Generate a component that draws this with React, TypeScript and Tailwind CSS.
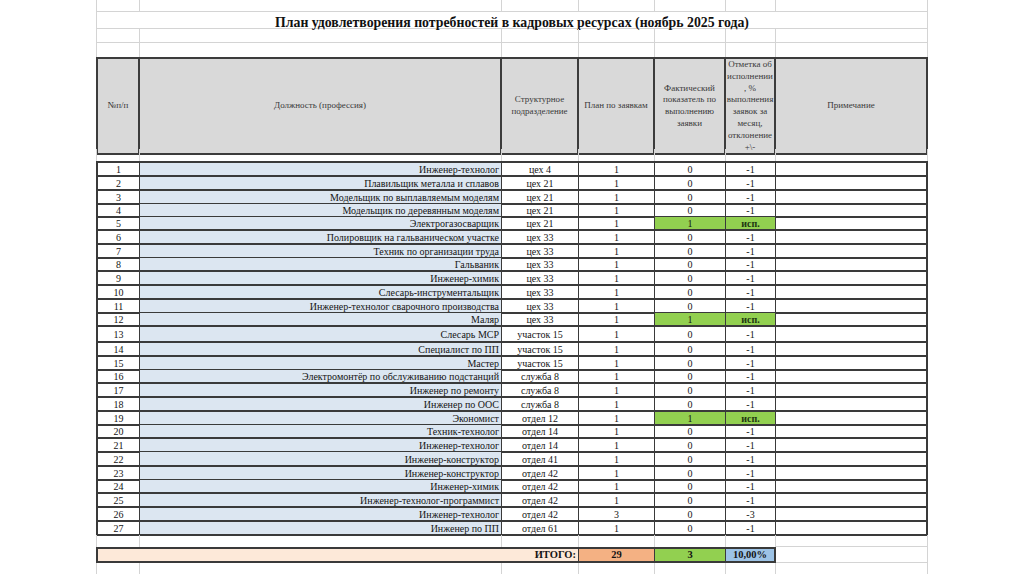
import clsx from "clsx";

type Row = {
  job: string;
  dept: string;
  plan: number;
  fact: number;
  mark: string;
  h: string;
};

const COLS = "grid grid-cols-[44px_362px_77px_76px_71px_50px_152px]";

const rows: Row[] = [
  { job: "Инженер-технолог", dept: "цех 4", plan: 1, fact: 0, mark: "-1", h: "h-[16px]" },
  { job: "Плавильщик металла и сплавов", dept: "цех 21", plan: 1, fact: 0, mark: "-1", h: "h-[14px]" },
  { job: "Модельщик по выплавляемым моделям", dept: "цех 21", plan: 1, fact: 0, mark: "-1", h: "h-[13px]" },
  { job: "Модельщик по деревянным моделям", dept: "цех 21", plan: 1, fact: 0, mark: "-1", h: "h-[13px]" },
  { job: "Электрогазосварщик", dept: "цех 21", plan: 1, fact: 1, mark: "исп.", h: "h-[14px]" },
  { job: "Полировщик на гальваническом участке", dept: "цех 33", plan: 1, fact: 0, mark: "-1", h: "h-[14px]" },
  { job: "Техник по организации труда", dept: "цех 33", plan: 1, fact: 0, mark: "-1", h: "h-[13px]" },
  { job: "Гальваник", dept: "цех 33", plan: 1, fact: 0, mark: "-1", h: "h-[14px]" },
  { job: "Инженер-химик", dept: "цех 33", plan: 1, fact: 0, mark: "-1", h: "h-[14px]" },
  { job: "Слесарь-инструментальщик", dept: "цех 33", plan: 1, fact: 0, mark: "-1", h: "h-[14px]" },
  { job: "Инженер-технолог сварочного производства", dept: "цех 33", plan: 1, fact: 0, mark: "-1", h: "h-[13px]" },
  { job: "Маляр", dept: "цех 33", plan: 1, fact: 1, mark: "исп.", h: "h-[14px]" },
  { job: "Слесарь МСР", dept: "участок 15", plan: 1, fact: 0, mark: "-1", h: "h-[16px]" },
  { job: "Специалист по ПП", dept: "участок 15", plan: 1, fact: 0, mark: "-1", h: "h-[14px]" },
  { job: "Мастер", dept: "участок 15", plan: 1, fact: 0, mark: "-1", h: "h-[13px]" },
  { job: "Электромонтёр по обслуживанию подстанций", dept: "служба 8", plan: 1, fact: 0, mark: "-1", h: "h-[14px]" },
  { job: "Инженер по ремонту", dept: "служба 8", plan: 1, fact: 0, mark: "-1", h: "h-[14px]" },
  { job: "Инженер по ООС", dept: "служба 8", plan: 1, fact: 0, mark: "-1", h: "h-[14px]" },
  { job: "Экономист", dept: "отдел 12", plan: 1, fact: 1, mark: "исп.", h: "h-[13px]" },
  { job: "Техник-технолог", dept: "отдел 14", plan: 1, fact: 0, mark: "-1", h: "h-[14px]" },
  { job: "Инженер-технолог", dept: "отдел 14", plan: 1, fact: 0, mark: "-1", h: "h-[13px]" },
  { job: "Инженер-конструктор", dept: "отдел 41", plan: 1, fact: 0, mark: "-1", h: "h-[15px]" },
  { job: "Инженер-конструктор", dept: "отдел 42", plan: 1, fact: 0, mark: "-1", h: "h-[13px]" },
  { job: "Инженер-химик", dept: "отдел 42", plan: 1, fact: 0, mark: "-1", h: "h-[14px]" },
  { job: "Инженер-технолог-программист", dept: "отдел 42", plan: 1, fact: 0, mark: "-1", h: "h-[14px]" },
  { job: "Инженер-технолог", dept: "отдел 42", plan: 3, fact: 0, mark: "-3", h: "h-[14px]" },
  { job: "Инженер по ПП", dept: "отдел 61", plan: 1, fact: 0, mark: "-1", h: "h-[13px]" },
];

// empty spreadsheet row with light gridlines
function BlankRow({ h, bottom = true }: { h: string; bottom?: boolean }) {
  return (
    <div className={clsx(COLS, h)}>
      {Array.from({ length: 7 }).map((_, i) => (
        <div
          key={i}
          className={clsx("border-r border-[#d4d4d4]", i === 0 && "border-l", bottom && "border-b")}
        />
      ))}
    </div>
  );
}

function HeaderCell({ children, first, last }: { children: React.ReactNode; first?: boolean; last?: boolean }) {
  return (
    <div
      className={clsx(
        "flex items-center justify-center text-center bg-[#d9d9d9] border-t-2 border-b-2 border-r-2 border-[#3c3c3c] text-[9px] leading-[11.8px] text-[#3a3a3a] whitespace-nowrap overflow-visible",
        first && "border-l-2",
        last && "border-r-2"
      )}
    >
      <div>{children}</div>
    </div>
  );
}

function DataRow({ row, index }: { row: Row; index: number }) {
  const done = row.mark === "исп.";
  const base = "flex items-center pt-[2px] border-b-2 border-[#3a3a3a] leading-none";
  const top = index === 0 && "border-t-2";
  return (
    <div className={clsx(COLS, row.h, "text-[10px] text-[#141414]")}>
      <div className={clsx(base, top, "justify-center border-l-2 border-r")}>{index + 1}</div>
      <div className={clsx(base, top, "justify-end pr-[2px] border-r bg-[#dce6f1] whitespace-nowrap")}>
        {row.job}
      </div>
      <div className={clsx(base, top, "justify-center border-r")}>{row.dept}</div>
      <div className={clsx(base, top, "justify-center border-r")}>{row.plan}</div>
      <div className={clsx(base, top, "justify-center border-r", done && "bg-[#92d050]")}>{row.fact}</div>
      <div className={clsx(base, top, "justify-center border-r", done && "bg-[#92d050] font-bold text-[#1d3510]")}>
        {row.mark}
      </div>
      <div className={clsx(base, top, "border-r-2")} />
    </div>
  );
}

export default function App() {
  return (
    <div className="min-h-screen bg-white font-['Liberation_Serif',serif] overflow-hidden">
      <div className="ml-[96px] w-[832px]">
        <BlankRow h="h-[12px]" />

        <div className={clsx(COLS, "h-[17px]")}>
          <div className="col-span-7 flex items-end justify-center border-x border-b border-[#d4d4d4] text-[13.8px] font-bold leading-none text-[#111]">
            <span className="-mb-[2px]">План удовлетворения потребностей в кадровых ресурсах (ноябрь 2025 года)</span>
          </div>
        </div>

        <BlankRow h="h-[14px]" />
        <BlankRow h="h-[14px]" bottom={false} />

        <div className={clsx(COLS, "h-[92px]")}>
          <HeaderCell first>№п/п</HeaderCell>
          <HeaderCell>Должность (профессия)</HeaderCell>
          <HeaderCell>
            Структурное
            <br />
            подразделение
          </HeaderCell>
          <HeaderCell>План по заявкам</HeaderCell>
          <HeaderCell>
            Фактический
            <br />
            показатель по
            <br />
            выполнению
            <br />
            заявки
          </HeaderCell>
          <HeaderCell>
            Отметка об
            <br />
            исполнении
            <br />, %
            <br />
            выполнения
            <br />
            заявок за
            <br />
            месяц,
            <br />
            отклонение
            <br />
            +\-
          </HeaderCell>
          <HeaderCell last>Примечание</HeaderCell>
        </div>

        <BlankRow h="h-[12px]" bottom={false} />

        {rows.map((row, i) => (
          <DataRow key={i} row={row} index={i} />
        ))}

        <div className={clsx(COLS, "h-[12px]")}>
          {Array.from({ length: 7 }).map((_, i) => (
            <div
              key={i}
              className={clsx("border-r border-[#d4d4d4]", i === 0 && "border-l", i === 6 && "border-b")}
            />
          ))}
        </div>

        <div className={clsx(COLS, "h-[16px] text-[10.5px] font-bold leading-none text-[#141414]")}>
          <div className="col-span-3 flex items-center justify-end pr-[2px] bg-[#fde9d9] border-l-2 border-y-2 border-r border-[#3a3a3a]">
            ИТОГО:
          </div>
          <div className="flex items-center justify-center bg-[#f4b183] border-y-2 border-r border-[#3a3a3a]">29</div>
          <div className="flex items-center justify-center bg-[#92d050] border-y-2 border-r border-[#3a3a3a]">3</div>
          <div className="flex items-center justify-center bg-[#9dc3e6] border-y-2 border-r-2 border-[#3a3a3a]">
            10,00%
          </div>
          <div className="border-r border-b border-[#d4d4d4]" />
        </div>

        <BlankRow h="h-[14px]" />
      </div>
    </div>
  );
}
